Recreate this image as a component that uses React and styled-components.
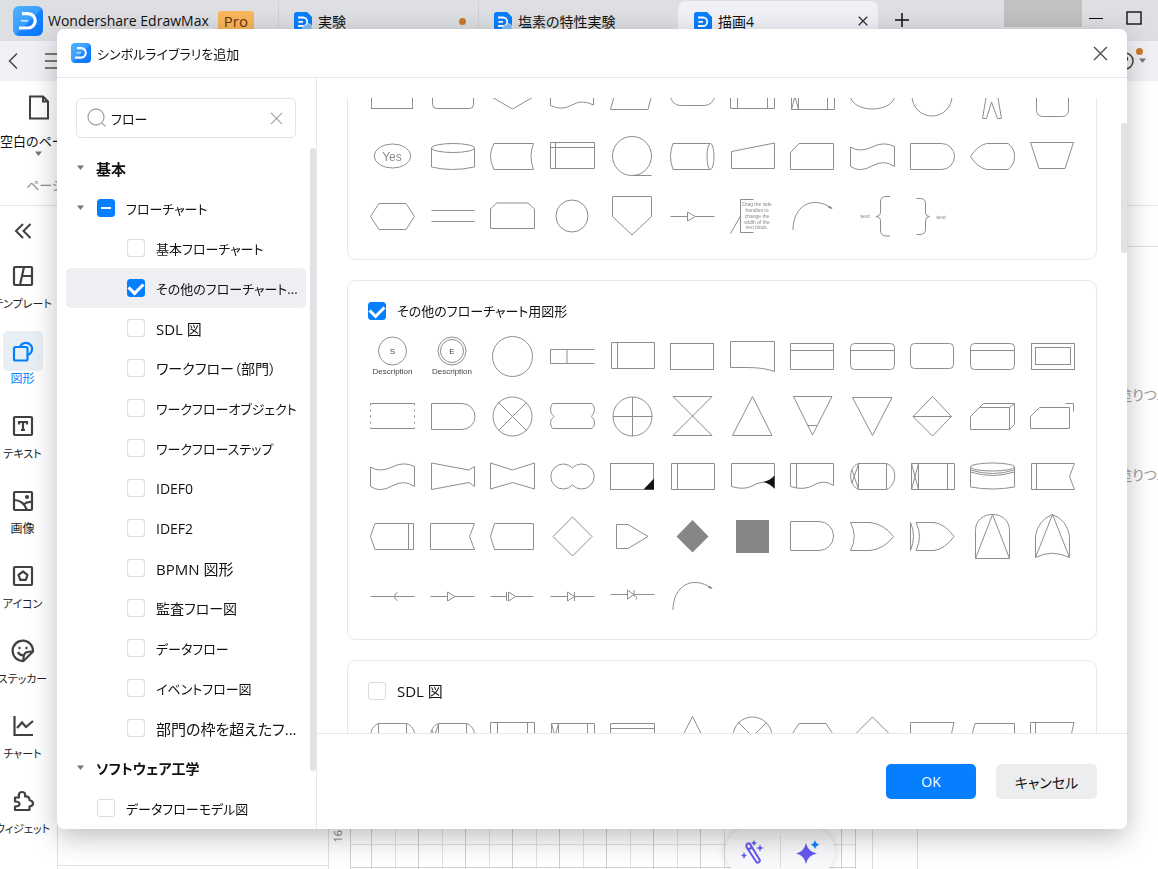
import { useLayoutEffect, useRef } from "react";
import styled, { createGlobalStyle } from "styled-components";


const GlobalStyle = createGlobalStyle`
    * {
        box-sizing: border-box;
    }

    body {
        margin: 0;
        overflow: hidden;
        background-color: #fff;
        color: #111;
        font-family: "Open Sans", "Noto Sans CJK JP", sans-serif;
        font-size: 14px;
        font-feature-settings: "palt";
    }

    button, input {
        font: inherit;
        font-feature-settings: inherit;
        color: inherit;
    }

    button {
        border: none;
        padding: 0;
        background: none;
    }

    svg {
        display: block;
        flex: none;
    }
`;

/* ---------- application window ---------- */

const Window = styled.div`
    height: 100vh;
    display: flex;
    flex-direction: column;
    overflow: hidden;
`;

const TitleBar = styled.header`
    height: 41px;
    flex: none;
    display: flex;
    background-color: #dedfe3;
`;

const Brand = styled.div`
    width: 278px;
    flex: none;
    display: flex;
    align-items: center;
    gap: 5px;
    padding-left: 13px;
    white-space: nowrap;
`;

const ProBadge = styled.span`
    margin-left: 4px;
    padding: 0 6px;
    border-radius: 3px;
    background-color: #f8b55c;
    color: #6b3408;
    font-size: 15px;
    line-height: 20px;
`;

const Tab = styled.div`
    width: 200px;
    height: 40px;
    margin-top: 1px;
    display: flex;
    align-items: center;
    gap: 6px;
    padding: 0 10px 0 16px;
    border-radius: ${props => props.$active ? "8px 8px 0 0" : "0"};
    background-color: ${props => props.$active ? "#f0f1f6" : "transparent"};
    box-shadow: ${props => props.$active ? "none" : "inset 1px 0 #d0d1d5"};
    white-space: nowrap;
`;

const TabName = styled.span`
    flex: 1;
`;

const Dot = styled.span`
    width: 7px;
    height: 7px;
    border-radius: 50%;
    background-color: #cb7a29;
    margin-right: 2px;
`;

const PlainButton = styled.button`
    display: flex;
    align-items: center;
    justify-content: center;
`;

const AddTab = styled(PlainButton)`
    width: 48px;
    height: 40px;
`;

const WindowButtons = styled.div`
    margin-left: auto;
    display: flex;
    align-items: flex-start;
`;

const AccountBlock = styled.div`
    width: 78px;
    height: 27px;
    background-color: #c1c1c1;
`;

const WindowButton = styled(PlainButton)`
    width: 40px;
    height: 36px;

    &:first-of-type {
        width: 27px;
    }

    &:last-of-type {
        width: 49px;
    }
`;

const ToolBar = styled.div`
    height: 40px;
    flex: none;
    display: flex;
    align-items: center;
    justify-content: space-between;
    padding: 0 11px 0 7px;
    background-color: #f0f1f6;
`;

const ToolGroup = styled.div`
    display: flex;
    align-items: center;
    gap: ${props => props.$gap}px;
`;

const HelpButton = styled(PlainButton)`
    position: relative;
    gap: 4px;
`;

const HelpDot = styled(Dot)`
    position: absolute;
    top: -4px;
    right: 4px;
    margin: 0;
`;

const Ribbon = styled.div`
    height: 125px;
    flex: none;
    display: flex;
    flex-direction: column;
    align-items: flex-start;
    padding: 14px 0 0 1px;
    border-bottom: 1px solid #e6e6e8;
    white-space: nowrap;
`;

const NewPage = styled.button`
    width: 75px;
    display: flex;
    flex-direction: column;
    align-items: center;
    font-size: 13px;
    line-height: 20px;

    svg:first-child {
        margin-bottom: 11px;
    }
`;

const RibbonCaption = styled.span`
    margin: 18px 0 0 25px;
    color: #8d8d91;
    font-size: 13px;
    line-height: 20px;
`;

const Workspace = styled.div`
    flex: 1;
    min-height: 0;
    display: flex;
`;

const Rail = styled.nav`
    width: 57px;
    flex: none;
    display: flex;
    flex-direction: column;
    align-items: center;
    gap: 19px;
    padding: 16px 12px 0 0;
`;

const CollapseButton = styled(PlainButton)`
    height: 18px;
    margin-bottom: -3px;
`;

const RailItem = styled.button`
    width: 44px;
    display: flex;
    flex-direction: column;
    align-items: center;
    color: ${props => props.$active ? "#067fff" : "#222"};
    font-size: ${props => props.$size || 11}px;
    line-height: 16px;
    white-space: nowrap;
`;

const RailIcon = styled.span`
    width: 40px;
    height: 40px;
    display: flex;
    align-items: center;
    justify-content: center;
    border-radius: 5px;
    background-color: ${props => props.$active ? "#e7eff5" : "transparent"};
`;

const SidePanel = styled.div`
    width: 272px;
    flex: none;
    border: solid #dfe0e3;
    border-width: 0 1px 0 1px;
    display: flex;
    align-items: flex-end;

    &::after {
        content: "";
        flex: 1;
        height: 3px;
        border-top: 1px solid #e2e2e4;
    }
`;

const Canvas = styled.main`
    position: relative;
    flex: 1;
    display: flex;
    padding-right: 16px;
    border-right: 1px solid #dcdcde;
`;

const Ruler = styled.div`
    width: 21px;
    display: flex;
    flex-direction: column;
    justify-content: flex-end;
    align-items: center;
    padding: 0 4px 26px 0;
    color: #777;
    font-size: 11px;

    span {
        writing-mode: vertical-rl;
        transform: rotate(180deg);
        line-height: 14px;
    }
`;

const Paper = styled.div`
    flex: 1;
    border: solid #d2d2d4;
    border-width: 0 1px;
    background-image:
        linear-gradient(to right, #cfcfd1 1px, transparent 1px),
        linear-gradient(to right, #e2e2e4 1px, transparent 1px),
        linear-gradient(to bottom, #cfcfd1 1px, transparent 1px),
        linear-gradient(to bottom, #e2e2e4 1px, transparent 1px);
    background-size: 47px 47px;
    background-position: 20px 0, 44px 0, 0 calc(100% + 45px), 0 calc(100% + 22px);
`;

const AiBar = styled.div`
    position: absolute;
    right: 37px;
    bottom: -8px;
    height: 50px;
    display: flex;
    align-items: center;
    border-radius: 25px;
    background-color: #f9f9fb;
    box-shadow: 0 0 8px rgba(0, 0, 0, 0.15);
`;

const AiButton = styled(PlainButton)`
    width: 55px;
    height: 32px;

    & + & {
        border-left: 1px solid #ddd;
    }
`;

const StyleStrip = styled.div`
    width: 44px;
    flex: none;
`;

const StylePanel = styled.aside`
    width: 241px;
    flex: none;
    border-left: 1px solid #dcdcde;
    color: #9a9a9e;
    white-space: nowrap;
    overflow: hidden;
`;

const StyleTabs = styled.div`
    height: 41px;
    margin-bottom: 128px;
    border-bottom: 1px solid #e2e2e4;
`;

const StyleRow = styled.div`
    height: 80px;
    padding-left: 200px;
    line-height: 40px;
`;

/* ---------- dialog ---------- */

const Dialog = styled.section`
    position: fixed;
    top: 29px;
    right: 31px;
    bottom: 40px;
    left: 57px;
    display: flex;
    flex-direction: column;
    border-radius: 7px;
    background-color: #fff;
    box-shadow: 0 8px 28px rgba(0, 0, 0, 0.26);
    overflow: hidden;
`;

const DialogHeader = styled.header`
    height: 49px;
    flex: none;
    display: flex;
    align-items: center;
    gap: 6px;
    padding: 0 19px 0 14px;
    border-bottom: 1px solid #e8e8ea;
`;

const DialogTitle = styled.h1`
    flex: 1;
    margin: 0;
    font-size: 13px;
    font-weight: 400;
`;

const DialogBody = styled.div`
    flex: 1;
    min-height: 0;
    display: flex;
`;

const TreePane = styled.div`
    width: 260px;
    flex: none;
    padding: 20px 0 0 9px;
    border-right: 1px solid #e8e8ea;
    display: flex;
    flex-direction: column;
`;

const SearchBox = styled.label`
    height: 40px;
    flex: none;
    margin: 0 20px 10px 10px;
    padding: 0 12px 0 10px;
    display: flex;
    align-items: center;
    gap: 4px;
    border: 1px solid #e4e4e6;
    border-radius: 5px;
    font-size: 13px;
`;

const SearchInput = styled.input`
    flex: 1;
    min-width: 0;
    border: none;
    outline: none;
    padding: 0;
    background: none;
`;

const TreeScroll = styled.div`
    flex: 1;
    min-height: 0;
    display: flex;
    overflow: hidden;
`;

const Tree = styled.ul`
    flex: 1;
    min-width: 0;
    margin: 0 4px 0 0;
    padding: 0;
    list-style: none;
`;

const TreeRow = styled.li`
    height: 40px;
    display: flex;
    align-items: center;
    padding-left: ${props => props.$level === 2 ? 40 : 10}px;
    border-radius: 5px;
    background-color: ${props => props.$selected ? "#eeeff2" : "transparent"};
    font-size: ${props => props.$size || 13}px;
    font-weight: ${props => props.$level === 0 ? 700 : 400};
    white-space: nowrap;
`;

const TreeCaret = styled.span`
    width: 20px;
    flex: none;
`;

const TreeThumb = styled.div`
    width: 6px;
    height: calc(100% - 58px);
    flex: none;
    border-radius: 3px;
    background-color: #e1e2e5;
`;

const CheckLabel = styled.label`
    display: flex;
    align-items: center;
    gap: 11px;
`;

const CheckInput = styled.input`
    appearance: none;
    width: 18px;
    height: 18px;
    flex: none;
    margin: 0 0 0 1px;
    border: 1px solid #dcdcde;
    border-radius: 3px;
    background-color: #fff;
    display: flex;
    align-items: center;
    justify-content: center;

    &:checked, &:indeterminate {
        border-color: #067fff;
        background-color: #067fff;
    }

    &:checked::before {
        content: "";
        width: 11px;
        height: 7px;
        margin-top: -3px;
        border: solid #fff;
        border-width: 0 0 3px 3px;
        transform: rotate(-45deg);
    }

    &:indeterminate::before {
        content: "";
        width: 10px;
        height: 2px;
        background-color: #fff;
    }
`;

const LibraryPane = styled.div`
    flex: 1;
    min-width: 0;
    display: flex;
    flex-direction: column;
`;

const LibraryArea = styled.div`
    flex: 1;
    min-height: 0;
    display: flex;
    padding-top: 20px;
`;

const LibraryList = styled.div`
    flex: 1;
    display: flex;
    flex-direction: column;
    gap: 20px;
    padding: 0 24px 0 30px;
    overflow-y: auto;
    scrollbar-width: none;
`;

const LibraryThumb = styled.div`
    width: 6px;
    height: 130px;
    flex: none;
    margin-top: 25px;
    border-radius: 3px;
    background-color: #e1e2e5;
`;

const Card = styled.section`
    flex: none;
    padding: 0 14px 13px;
    border: 1px solid #e8e8ea;
    border-radius: 9px;
`;

const CardHeader = styled.h2`
    height: 45px;
    display: flex;
    align-items: flex-end;
    margin: 0;
    padding: 0 5px 5px;
    font-size: ${props => props.$size || 13}px;
    font-weight: 400;
    line-height: 20px;
`;

const SymbolGrid = styled.div`
    display: grid;
    grid-template-columns: repeat(12, 1fr);
    justify-items: center;
`;

const SymbolSvg = styled.svg`
    width: 60px;
    height: 60px;
    fill: none;
    stroke: #8e8e8e;
    stroke-width: 1;

    text {
        stroke: none;
        fill: ${props => props.$soft ? "#8a8a8a" : "#444"};
        text-anchor: middle;
        font-family: "Liberation Sans", Arial, sans-serif;
    }
`;

const DialogFooter = styled.footer`
    height: 96px;
    flex: none;
    display: flex;
    justify-content: flex-end;
    align-items: center;
    gap: 20px;
    padding: 0 30px 0 0;
    border-top: 1px solid #e8e8ea;
`;

const DialogButton = styled.button`
    min-width: ${props => props.$primary ? 90 : 101}px;
    height: 35px;
    border-radius: 5px;
    background-color: ${props => props.$primary ? "#067fff" : "#ebedef"};
    color: ${props => props.$primary ? "#fff" : "#111"};
`;

/* ---------- icons ---------- */

function Logo({ size }) {
    return (
        <svg width={size} height={size} viewBox="0 0 30 30" fill="none">
            <linearGradient id="logo" x1="0" y1="0" x2="1" y2="1">
                <stop offset="0" stopColor="#4db2ff" />
                <stop offset="0.5" stopColor="#3a9dff" />
                <stop offset="0.55" stopColor="#1482ff" />
                <stop offset="1" stopColor="#0a78ff" />
            </linearGradient>
            <rect width="30" height="30" rx="6" fill="url(#logo)" />
            <path d="M9 7.6H15A7.2 7.2 0 0 1 15 22H6" stroke="#fff" strokeWidth="3.2" />
            <path d="M8 14.8H15" stroke="#c4e3ff" strokeWidth="1.8" />
        </svg>
    );
}

function DocIcon({ cloud }) {
    return (
        <svg width="18" height="18" viewBox="0 0 18 18" fill="none">
            <path d="M2.5 0H13L18 5V15.5Q18 18 15.5 18H2.5Q0 18 0 15.5V2.5Q0 0 2.5 0Z" fill="#067fff" />
            <path d="M4 5.5H9A3.8 3.8 0 0 1 9 14H4M4.5 9.8H9" stroke="#fff" strokeWidth="1.8" />
            {cloud && <path d="M10 18.5A3 3 0 0 1 12 13A3.5 3.5 0 0 1 18 14V18.5Z" fill="#7cc0ff" stroke="#dedfe3" strokeWidth=".6" />}
        </svg>
    );
}

function Cross({ size, color, width = 1.3 }) {
    return (
        <svg width={size} height={size} viewBox="0 0 14 14" stroke={color} strokeWidth={width}>
            <path d="M1 1L13 13M13 1L1 13" />
        </svg>
    );
}

function Caret({ color = "#77777a" }) {
    return (
        <svg width="9" height="6" viewBox="0 0 9 6">
            <path d="M1 .5H8L4.5 5Z" fill={color} />
        </svg>
    );
}

const railPaths = {
    template: <><rect x="3" y="3" width="18" height="18" rx="1" /><path d="M13 3L9 21M12 12H21" /></>,
    shape: <><rect x="3" y="8" width="13.5" height="13.5" rx="1.5" /><path d="M9 8A6.2 6.2 0 1 1 16.5 16" /></>,
    text: <><rect x="3" y="3" width="18" height="18" rx="1" /><path d="M8 10.5V8H16V10.5M12 8V16M10 16H14" /></>,
    image: <><rect x="3" y="3" width="18" height="18" rx="1" /><path d="M3 11Q12 11 16 21M12.5 15.5Q16 12.5 21 13" /><circle cx="16" cy="8" r="1" /></>,
    icon: <><rect x="3" y="3" width="18" height="18" rx="1" /><path d="M12 7.5L16.5 10.8L14.8 15.8H9.2L7.5 10.8Z" strokeLinejoin="round" /></>,
    sticker: <><path d="M12.5 22A10.2 10.2 0 1 1 22 12.5Z" /><path d="M12.5 22Q12 15 15 13.5Q17 12.5 22 12.5M7 13Q8.5 16.5 12 16" /><path d="M7.5 9H9.5M14.5 9H16.5" strokeWidth="2.4" /></>,
    chart: <path d="M3.5 2V21H22M6 14L11 8.5L15 13L22 7" />,
    widget: <path d="M4 8.500H8Q7 3 11 3Q15 3 14 7.500Q18.500 7 18.500 11Q22 12 22 14.500Q22 17 18.500 17.500V21H4V17.500Q8.500 17.500 8.500 15Q8.500 12.500 4 12.500Z" strokeLinejoin="round" />,
};

const railItems = [
    { icon: "template", name: "テンプレート" },
    { icon: "shape", name: "図形", active: true, size: 12 },
    { icon: "text", name: "テキスト" },
    { icon: "image", name: "画像", size: 12 },
    { icon: "icon", name: "アイコン" },
    { icon: "sticker", name: "ステッカー" },
    { icon: "chart", name: "チャート" },
    { icon: "widget", name: "ウィジェット" },
];

/* ---------- flowchart symbols, drawn around 0,0 in a 60px cell ---------- */

const wave = <path d="M-21.5-9Q-12-3 0-9T22.5-9.5V10.5Q12 3 0 10T-21.5 10.5Z" />;
const delay = <path d="M-20.5-12.5H10A13 13 0 0 1 10 13.5H-20.5Z" />;
const arcArrow = <><path d="M-19 14C-19-10 0-21 19.5-8" /><path d="M16.5-8.5L20-7.5L17.5-10Z" fill="#777" /></>;
const crossCircle = <><circle cx=".5" cy=".5" r="19.5" /><path d="M-13.5-13.5L14.5 14.5M14.5-13.5L-13.5 14.5" /></>;
const predefined = <path d="M-21.5-13.500H22.5V12.500H-21.5ZM-14.5-13.500V12.500M15.5-13.500V12.500" />;
const predefinedCross = <path d="M-20.5-12.500H22.5V13.5H-20.5ZM-13.5-12.500V13.5M15.5-12.500V13.5M-20.5-12.500L-13.5 13.5M-13.5-12.500L-20.5 13.5" />;
const roundedEnds = <path d="M-13.5-12.500H14.5V13.5H-13.5ZM-13.5-12.500C-24-9-24 9-13.5 13.5M14.5-12.500C25.5-9 25.5 9 14.5 13.5" />;
const roundedEndsCross = <>{roundedEnds}<path d="M-13.5-12L-20 7M-20-6L-13.5 13" /></>;
const hexagon = <path d="M-21.5.5L-13-12.5H14L22.5.5L14 13.5H-13Z" />;
const roundedHeader = <><rect x="-21.5" y="-12.5" width="44" height="26" rx="4" /><path d="M-21.5-5.5H22.5" /></>;
const triangle = <path d="M.5-19.5L20 19.5H-19.5Z" />;
const diamond = <path d="M.5-19L20 .5L.5 20L-19 .5Z" />;

const basicSymbols = [
    <rect x="-20.5" y="-13.5" width="41" height="26" />,
    <rect x="-19.5" y="-13.5" width="41" height="26" rx="4" />,
    <path d="M.5-13L23 0L.5 13L-22 0Z" />,
    <path d="M-21.5-13H21.5V9Q10 3 0 9T-21.5 9.5Z" />,
    <path d="M-14-13.5H23L16 13.5H-21.5Z" />,
    <rect x="-21.5" y="-10.5" width="44" height="20" rx="10" />,
    predefined,
    predefinedCross,
    <ellipse cx=".5" cy="0" rx="22" ry="13" />,
    <circle cx="0" cy="0" r="20" />,
    <path d="M-4-10L-9.5 22.5H-5.5L-.5 6L5.5 22.5H9.5L4-10" />,
    <rect x="-15.5" y="-14.5" width="32" height="35" rx="6" />,

    <><ellipse cx=".5" cy="0" rx="18.3" ry="12" /><text y="4.5" fontSize="12">Yes</text></>,
    <><ellipse cx="1" cy="-8" rx="21.5" ry="4.5" /><path d="M-20.5-8V11Q0 16 22.5 11V-8" /></>,
    <path d="M-18-12.5H21.5Q16.5 0 21.5 13.5H-18Q-25 0-18-12.5Z" />,
    <path d="M-21.5-13.5H22.5V12.5H-21.5ZM-16.5-13.5V12.5M-21.5-8.5H22.5" />,
    <><circle cx="0" cy="0" r="19.5" /><path d="M0 19.5H19.5" /></>,
    <><ellipse cx="18.5" cy=".5" rx="3.5" ry="13" /><path d="M18.5-12.5H-19Q-24 0-19 13.5H18.5" /></>,
    <path d="M-20.5-4.5L22.5-13V12.5H-20.5Z" />,
    <path d="M-21.5-3.5L-13-12.5H21.5V13.5H-21.5Z" />,
    wave,
    <path d="M-21.5-12.5H9.5A13 13 0 0 1 9.5 13.5H-21.5Z" />,
    <path d="M-21.5.5Q-15-10-5.5-12.5H16Q22.5-8 22.5.5T16 13.5H-5.5Q-15 11-21.5.5Z" />,
    <path d="M-21.5-13.5H21.5L13 12.5H-13Z" />,

    hexagon,
    <path d="M-20.5-5.5H22.5M-20.5 5.5H22.5" />,
    <path d="M-21.5-7L-15.5-13H16L22.5-7V12.5H-21.5Z" />,
    <circle cx="0" cy="0" r="16" />,
    <path d="M-19.5-19.5H19.5V.5L0 19L-19.5.5Z" />,
    <path d="M-21.5.5H-4.5M3.5.5H22.5M-4.5-4L3.5.5L-4.5 5Z" />,
    <>
        <path d="M1.5-16.5H-11.5V16.5H1.5M-11.5 0L-21.5 17.5" />
        <text fontSize="5">
            <tspan x="5" y="-10">Drag the side</tspan>
            <tspan x="5" y="-4">handles to</tspan>
            <tspan x="5" y="2">change the</tspan>
            <tspan x="5" y="8">width of the</tspan>
            <tspan x="5" y="13">text block.</tspan>
        </text>
    </>,
    arcArrow,
    <><path d="M18-19.5H14Q8.5-19.5 8.5-14V-4Q8.5 0 4 .5Q8.5 1 8.5 5V14Q8.5 20 14 20H18" /><text x="-7" y="2" fontSize="6">text</text></>,
    <><path d="M-15.5-17.5H-12Q-6.5-17.5-6.5-13V-3Q-6.5 .5-2.5 .5Q-6.5 1-6.5 5V13Q-6.5 18.5-12 18.5H-15.5" /><text x="9" y="3" fontSize="6">text</text></>,
];

const otherSymbols = [
    <><circle cx=".5" cy="-5" r="14" /><text x=".5" y="-2" fontSize="8">S</text><text x=".5" y="18" fontSize="8">Description</text></>,
    <><circle cx="0" cy="-5" r="14" /><circle cx="0" cy="-5" r="11.5" /><text y="-2" fontSize="8">E</text><text y="18" fontSize="8">Description</text></>,
    <circle cx=".5" cy=".5" r="20" />,
    <path d="M22.5-6.5H-21.5V7.5H22.5M-5-6.5V7.5" />,
    <path d="M-20.5-13.500H22.5V12.500H-20.5ZM-14.5-13.500V12.500" />,
    <rect x="-21.5" y="-12.5" width="43" height="26" />,
    <path d="M-21.5-14.5H22.5V15.5Q12 11.5-5 11.5H-21.5Z" />,
    <path d="M-21.5-12.5H21.5V13.5H-21.5ZM-21.5-5.5H21.5" />,
    roundedHeader,
    <rect x="-21.5" y="-12.5" width="43" height="25" rx="4" />,
    roundedHeader,
    <><rect x="-20.5" y="-12.5" width="43" height="26" /><rect x="-16.5" y="-8.5" width="35" height="17" /></>,

    <><path d="M-21.5-12.5H22.5M-21.5 12.5H22.5" /><path d="M-21.5-12.5V12.5M22.5-12.5V12.5" strokeDasharray="2 4" /></>,
    delay,
    crossCircle,
    <path d="M-19.5-12.5H20Q22.5-10 22.5-6.5T19.5 .5Q22.5 3 22.5 7T20 12.5H-19.5Q-21.5 10-21.5 6.5T-18 .5Q-21.5-2-21.5-6T-19.5-12.5Z" />,
    <><circle cx=".5" cy=".5" r="19.5" /><path d="M-19 .5H20M.5-19V20" /></>,
    <path d="M-19-19.5H20L-19 19.5H20Z" />,
    triangle,
    <path d="M-18.5-19.5H20L.5 19ZM-4.5 9.5H5" />,
    <path d="M-19.5-18.5H20L.5 19.5Z" />,
    <path d="M.5-19.5L19.5.5L.5 20L-19 .5ZM-19 .5H19.5" />,
    <path d="M-21.5.5L-12.5-8.5H17.5V13.5H-21.5ZM-12.5-8.5L-8.5-12.5H22.5V8.5L17.5 13.5M17.5-8.5L22.5-12.5" />,
    <path d="M-21.5.5L-12.5-8.5H17.5V12.5H-21.5ZM13.5-12.5H21.5V-4.5" />,

    wave,
    <path d="M-20.5-13L17-6L22.5-9.5V10.5L17 6.5L-20.5 13.5Z" />,
    <path d="M-21.5-13L.5-6L22.5-13V13L.5 6.5L-21.5 13Z" />,
    <path d="M.5-8A12.5 12.5 0 1 0 .5 9A12.5 12.5 0 1 0 .5-8Z" />,
    <><rect x="-21.5" y="-12.5" width="43" height="26" /><path d="M11.5 13.5L22 2.5V13.5Z" fill="#111" stroke="none" /></>,
    <path d="M-20.5-12.5H22.5V13.5H-20.5ZM-14.5-12.5V13.5" />,
    <><path d="M12 6Q4 7-1 10.5Q-9 14-20.5 10.5V-12.5H22.5V12" /><path d="M11 6Q18 4.5 22.5-.5V13Q18 7.500 11 6Z" fill="#111" stroke="none" /></>,
    <path d="M-21.5-12.5H21.5V9.5Q12 3 2 9T-21.5 10.5ZM-15.5-12.5V12" />,
    roundedEndsCross,
    predefinedCross,
    <><ellipse cx=".5" cy="-9" rx="22" ry="4" /><path d="M-21.5-9V11Q.5 15 22.5 11V-9M-21.5-6Q.5 1 22.5-6M-21.5-4Q.5 3 22.5-4" /></>,
    <path d="M-20.5-12.5H22.5L17.5.5L22.5 13.5H-20.5ZM-15.5-12.5V13.5" />,

    <path d="M-21.5.5L-17-12.5H21.5V13.5H-17ZM16.5-12.5V13.5" />,
    <path d="M-21.5-12.5H22.5L17.5.5L22.5 13.5H-21.5Z" />,
    <path d="M-21.5.5L-17.5-12.5H21.5V13.5H-17.5Z" />,
    diamond,
    <path d="M-15.5-11.5H-4L16 .5L-4 12.5H-15.5Z" />,
    <path d="M.5-16L16.5.5L.5 16.5L-15.5.5Z" fill="#868686" stroke="none" />,
    <rect x="-16" y="-16" width="33" height="33" fill="#868686" stroke="none" />,
    <path d="M-21.5-14.5H7A14.5 14.5 0 0 1 7 14.5H-21.5Z" />,
    <path d="M-21.5-13.5H-2Q12-12 21.5.5Q12 13-2 14.5H-21.5Q-14 0-21.5-13.5Z" />,
    <path d="M-21.5-13.5V14.5Q-15.5 0-21.5-13.5M-16-13.5H2Q13-12 22 .5Q13 13 2 14.5H-16Q-9 0-16-13.5Z" />,
    <path d="M-16.5 22.5V-5.5C-16.5-27 17.5-27 17.5-5.5V22.5ZM-16.5 22.5L.5-21.5L17.5 22.5" />,
    <path d="M-16.5 21.5V0Q-14-16 .5-21.5Q15-16 17.5 0V21.5Q0 13-16.5 21.5L.5-21.5L17.5 21.5" />,

    <path d="M-21.5.5H22.5M5.5-3.5A4.2 4.2 0 0 0 5.5 4.5" />,
    <path d="M-21.5.5H-4.5M3 .5H22.5M-4.5-4L3 .5L-4.5 5Z" />,
    <path d="M-21.5.5H-5.5M3.5.5H21.5M-5.5-4V5M-3.5-4L3.5.5L-3.5 5Z" />,
    <path d="M-21.5.5H-4.5M2.5.5H22.5M2.5-4V5M-4.5-4L2.5.5L-4.5 5Z" />,
    <path d="M-21.5-1.5H-4.5M2-1.5H22.5M2-6V0Q6 0 4 3.5M-4.5-6L2-1.5L-4.5 3Z" />,
    arcArrow,
];

const sdlSymbols = [
    roundedEnds,
    roundedEndsCross,
    predefined,
    predefinedCross,
    <path d="M-21.5-12.5H22.5V13.5H-21.5ZM-21.5-7.5H22.5" />,
    triangle,
    crossCircle,
    hexagon,
    diamond,
    <path d="M-21.5-13.5H22L16 13.5H-21.5Z" />,
    <path d="M-17-12.5H22.5V13.5H-24Z" />,
    <path d="M-21.5-13.5H22L16 13.5H-21.5ZM-16.5-13.5V13.5" />,
];

const libraries = [
    { id: "lib-basic", name: "基本フローチャート", symbols: basicSymbols, soft: true },
    { id: "lib-other", name: "その他のフローチャート用図形", checked: true, symbols: otherSymbols },
    { id: "lib-sdl", name: "SDL 図", size: 15, symbols: sdlSymbols },
];

const treeItems = [
    { level: 0, name: "基本", open: true, size: 15 },
    { level: 1, name: "フローチャート", open: true, partial: true },
    { level: 2, name: "基本フローチャート" },
    { level: 2, name: "その他のフローチャート...", checked: true, selected: true },
    { level: 2, name: "SDL 図", size: 15 },
    { level: 2, name: "ワークフロー（部門）", size: 14 },
    { level: 2, name: "ワークフローオブジェクト" },
    { level: 2, name: "ワークフローステップ" },
    { level: 2, name: "IDEF0", size: 14 },
    { level: 2, name: "IDEF2", size: 14 },
    { level: 2, name: "BPMN 図形", size: 15 },
    { level: 2, name: "監査フロー図", size: 14 },
    { level: 2, name: "データフロー" },
    { level: 2, name: "イベントフロー図" },
    { level: 2, name: "部門の枠を超えたフ...", size: 15 },
    { level: 0, name: "ソフトウェア工学", open: true, size: 14 },
    { level: 1, name: "データフローモデル図" },
];


function CheckItem({ name, checked, partial }) {
    const inputRef = useRef(null);

    useLayoutEffect(() => {
        inputRef.current.indeterminate = Boolean(partial);
    }, [partial]);

    return (
        <CheckLabel>
            <CheckInput ref={inputRef} type="checkbox" defaultChecked={checked} />
            {name}
        </CheckLabel>
    );
}

function SymbolTree() {
    return (
        <TreePane>
            <SearchBox>
                <svg width="20" height="20" viewBox="0 0 20 20" fill="none" stroke="#a5a5a8" strokeWidth="1.3">
                    <circle cx="9" cy="9" r="8" />
                    <path d="M15 15L18.5 18.5" />
                </svg>
                <SearchInput type="text" aria-label="検索" defaultValue="フロー" />
                <PlainButton aria-label="クリア"><Cross size={13} color="#a5a5a8" /></PlainButton>
            </SearchBox>
            <TreeScroll>
                <Tree>
                    {treeItems.map(item => (
                        <TreeRow key={item.name} $level={item.level} $selected={item.selected} $size={item.size}>
                            <TreeCaret>{item.open && <Caret />}</TreeCaret>
                            {item.level === 0 ? item.name : <CheckItem {...item} />}
                        </TreeRow>
                    ))}
                </Tree>
                <TreeThumb />
            </TreeScroll>
        </TreePane>
    );
}

function LibraryCards() {
    const listRef = useRef(null);

    useLayoutEffect(() => {
        listRef.current.scrollTop = 78;
    }, []);

    return (
        <LibraryArea>
            <LibraryList ref={listRef}>
                {libraries.map(library => (
                    <Card key={library.id}>
                        <CardHeader $size={library.size}>
                            <CheckItem name={library.name} checked={library.checked} />
                        </CardHeader>
                        <SymbolGrid>
                            {library.symbols.map((symbol, index) => (
                                <SymbolSvg key={index} viewBox="-30 -30 60 60" $soft={library.soft}>{symbol}</SymbolSvg>
                            ))}
                        </SymbolGrid>
                    </Card>
                ))}
            </LibraryList>
            <LibraryThumb />
        </LibraryArea>
    );
}

function LibraryDialog() {
    return (
        <Dialog role="dialog" aria-labelledby="dialog-title">
            <DialogHeader>
                <Logo size={20} />
                <DialogTitle id="dialog-title">シンボルライブラリを追加</DialogTitle>
                <PlainButton aria-label="閉じる"><Cross size={15} color="#55504f" /></PlainButton>
            </DialogHeader>
            <DialogBody>
                <SymbolTree />
                <LibraryPane>
                    <LibraryCards />
                    <DialogFooter>
                        <DialogButton $primary>OK</DialogButton>
                        <DialogButton>キャンセル</DialogButton>
                    </DialogFooter>
                </LibraryPane>
            </DialogBody>
        </Dialog>
    );
}

function TopBars() {
    return (
        <>
            <TitleBar>
                <Brand>
                    <Logo size={30} />
                    Wondershare EdrawMax
                    <ProBadge>Pro</ProBadge>
                </Brand>
                <Tab><DocIcon cloud /><TabName>実験</TabName><Dot /></Tab>
                <Tab><DocIcon cloud /><TabName>塩素の特性実験</TabName></Tab>
                <Tab $active>
                    <DocIcon />
                    <TabName>描画4</TabName>
                    <PlainButton aria-label="タブを閉じる"><Cross size={10} color="#333" width={1.8} /></PlainButton>
                </Tab>
                <AddTab aria-label="新しいタブ">
                    <svg width="14" height="14" viewBox="0 0 14 14" stroke="#111" strokeWidth="1.5"><path d="M7 0V14M0 7H14" /></svg>
                </AddTab>
                <WindowButtons>
                    <AccountBlock />
                    <WindowButton aria-label="最小化">
                        <svg width="14" height="14" viewBox="0 0 14 14" stroke="#111"><path d="M0 7.5H14" /></svg>
                    </WindowButton>
                    <WindowButton aria-label="最大化">
                        <svg width="16" height="14" viewBox="0 0 16 14" fill="none" stroke="#111"><rect x="1" y="1" width="14" height="12" strokeWidth="1.4" /></svg>
                    </WindowButton>
                </WindowButtons>
            </TitleBar>
            <ToolBar>
                <ToolGroup $gap={24}>
                    <PlainButton aria-label="戻る">
                        <svg width="14" height="18" viewBox="0 0 14 18" fill="none" stroke="#444" strokeWidth="1.5"><path d="M10 1.5L2.5 9L10 16.5" /></svg>
                    </PlainButton>
                    <PlainButton aria-label="メニュー">
                        <svg width="18" height="16" viewBox="0 0 18 16" stroke="#55504f" strokeWidth="1.5"><path d="M0 1H18M0 8H18M0 15H18" /></svg>
                    </PlainButton>
                </ToolGroup>
                <HelpButton aria-label="ヘルプ">
                    <svg width="18" height="18" viewBox="0 0 18 18" fill="none" stroke="#333" strokeWidth="1.4">
                        <circle cx="9" cy="9" r="8" />
                        <path d="M6.5 7Q7 4.5 9 4.5T11.5 7Q11.5 8.5 9 9.5V11M9 12.5V13.5" />
                    </svg>
                    <Caret />
                    <HelpDot />
                </HelpButton>
            </ToolBar>
            <Ribbon>
                <NewPage>
                    <svg width="22" height="25" viewBox="0 0 22 25" fill="none" stroke="#433e41" strokeWidth="2"><path d="M2 1.5H15L20 6.5V23.5H2ZM15 1.5V6.5H20" /></svg>
                    空白のページ
                    <Caret />
                </NewPage>
                <RibbonCaption>ページ</RibbonCaption>
            </Ribbon>
        </>
    );
}

function WorkArea() {
    return (
        <Workspace>
            <Rail>
                <CollapseButton aria-label="折りたたむ">
                    <svg width="18" height="18" viewBox="0 0 18 18" fill="none" stroke="#433e41" strokeWidth="2"><path d="M9 2L2 9L9 16M16.5 2L9.5 9L16.5 16" /></svg>
                </CollapseButton>
                {railItems.map(item => (
                    <RailItem key={item.icon} $active={item.active} $size={item.size}>
                        <RailIcon $active={item.active}>
                            <svg width="24" height="24" viewBox="0 0 24 24" fill="none" stroke={item.active ? "#067fff" : "#433e41"} strokeWidth="2.2">
                                {railPaths[item.icon]}
                            </svg>
                        </RailIcon>
                        {item.name}
                    </RailItem>
                ))}
            </Rail>
            <SidePanel />
            <Canvas>
                <Ruler><span>16</span></Ruler>
                <Paper />
                <AiBar>
                    <AiButton aria-label="AI描画">
                        <svg width="24" height="24" viewBox="0 0 24 24" fill="none">
                            <path d="M5.5 5A2 2 0 0 1 9 4L18.5 19.5A2 2 0 0 1 15 21.5L5.5 7Z M7 9.5L11 7.5" stroke="#6558f0" strokeWidth="2" />
                            <path d="M13 0L14 2L16 3L14 4L13 6L12 4L10 3L12 2ZM19 4L20 7L23 8L20 9L19 12L18 9L15 8L18 7ZM3 12L4 14.5L6 15.5L4 16.5L3 19L2 16.5L0 15.5L2 14.5Z" fill="#5b62f4" />
                        </svg>
                    </AiButton>
                    <AiButton aria-label="AIアシスタント">
                        <svg width="24" height="24" viewBox="0 0 24 24">
                            <path d="M10 3Q12 12 21 13.5Q12 15 10 24Q8 15 0 13.5Q8 12 10 3Z" fill="#6558f0" />
                            <path d="M19 0Q20 4 23.5 4.5Q20 5.5 19 9Q18 5.5 14.5 4.5Q18 4 19 0Z" fill="#1685ff" />
                        </svg>
                    </AiButton>
                </AiBar>
            </Canvas>
            <StyleStrip />
            <StylePanel>
                <StyleTabs />
                <StyleRow>塗りつぶし</StyleRow>
                <StyleRow>塗りつぶし</StyleRow>
            </StylePanel>
        </Workspace>
    );
}

function App() {
    return (
        <>
            <GlobalStyle />
            <Window>
                <TopBars />
                <WorkArea />
            </Window>
            <LibraryDialog />
        </>
    );
}

export default App;
